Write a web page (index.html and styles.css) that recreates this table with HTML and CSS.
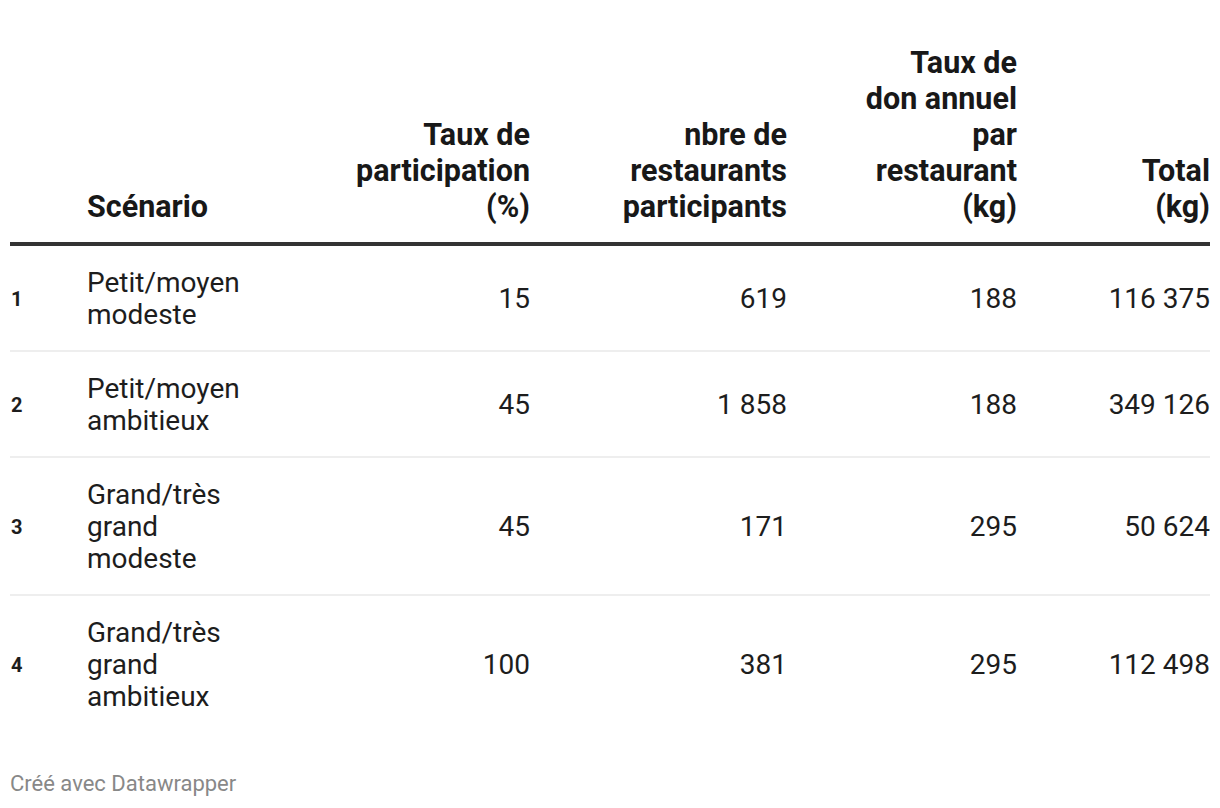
FILE: index.html
```html
<!DOCTYPE html>
<html lang="fr">
<head>
<meta charset="utf-8">
<title>Scénarios</title>
<link rel="stylesheet" href="styles.css">
</head>
<body>
<div class="chart">
  <table class="dw-table">
    <colgroup>
      <col class="c-rank">
      <col class="c-scen">
      <col class="c-part">
      <col class="c-nbre">
      <col class="c-don">
      <col class="c-total">
    </colgroup>
    <thead>
      <tr>
        <th class="left"></th>
        <th class="left">Scénario</th>
        <th>Taux de<br>participation<br>(%)</th>
        <th>nbre de<br>restaurants<br>participants</th>
        <th>Taux de<br>don annuel<br>par<br>restaurant<br>(kg)</th>
        <th>Total<br>(kg)</th>
      </tr>
    </thead>
    <tbody>
      <tr>
        <td class="rank">1</td>
        <td class="left">Petit/moyen<br>modeste</td>
        <td>15</td>
        <td>619</td>
        <td>188</td>
        <td>116&nbsp;375</td>
      </tr>
      <tr>
        <td class="rank">2</td>
        <td class="left">Petit/moyen<br>ambitieux</td>
        <td>45</td>
        <td>1&nbsp;858</td>
        <td>188</td>
        <td>349&nbsp;126</td>
      </tr>
      <tr>
        <td class="rank">3</td>
        <td class="left">Grand/très<br>grand<br>modeste</td>
        <td>45</td>
        <td>171</td>
        <td>295</td>
        <td>50&nbsp;624</td>
      </tr>
      <tr>
        <td class="rank">4</td>
        <td class="left">Grand/très<br>grand<br>ambitieux</td>
        <td>100</td>
        <td>381</td>
        <td>295</td>
        <td>112&nbsp;498</td>
      </tr>
    </tbody>
  </table>
  <footer class="credit">Créé avec Datawrapper</footer>
</div>
</body>
</html>
```
FILE: styles.css
```css
html, body {
  margin: 0;
  padding: 0;
  background: #ffffff;
}

body {
  font-family: Roboto, "Liberation Sans", Arial, sans-serif;
  color: #1d1d1d;
}

.chart {
  padding: 45px 10px 0 10px;
}

.dw-table {
  width: 1200px;
  border-collapse: collapse;
  table-layout: fixed;
}

.c-rank { width: 77px; }
.c-scen { width: 180px; }
.c-part { width: 263px; }
.c-nbre { width: 257px; }
.c-don { width: 230px; }
.c-total { width: 193px; }

.dw-table th {
  font-weight: 700;
  font-size: 30.5px;
  line-height: 36px;
  text-align: right;
  vertical-align: bottom;
  padding: 0 0 17px 0;
  color: #181818;
  border-bottom: 4px solid #333333;
}

.dw-table th.left,
.dw-table td.left {
  text-align: left;
}

.dw-table td {
  font-size: 28px;
  line-height: 32px;
  text-align: right;
  vertical-align: middle;
  padding: 21px 0 19px 0;
  border-bottom: 2px solid #eeeeee;
}

.dw-table tbody tr:last-child td {
  border-bottom: none;
}

.dw-table td.rank {
  font-size: 20px;
  font-weight: 700;
  text-align: left;
  padding-left: 1px;
}

.credit {
  margin-top: 40px;
  font-size: 22px;
  line-height: 24px;
  color: #888888;
}
```
